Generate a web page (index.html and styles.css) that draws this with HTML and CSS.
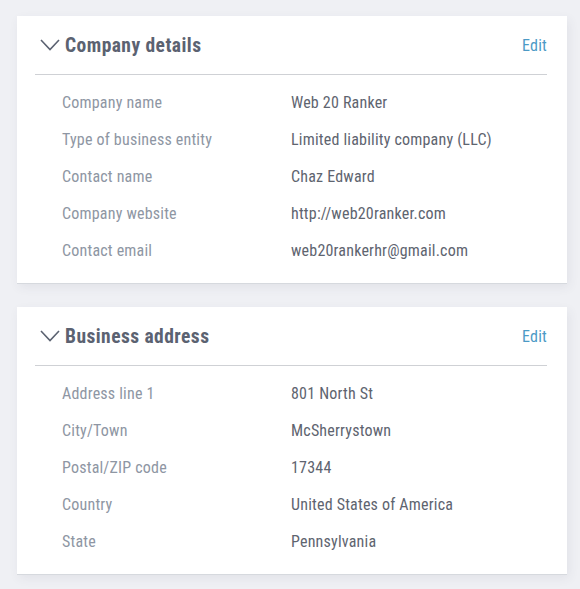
FILE: index.html
```html
<!DOCTYPE html>
<html lang="en">
<head>
  <meta charset="UTF-8">
  <meta name="viewport" content="width=device-width, initial-scale=1.0">
  <title>Company profile</title>
  <link rel="stylesheet" href="styles.css">
</head>
<body>
  <section class="card">
    <header class="card-header">
      <svg class="chevron" width="20" height="12" viewBox="0 0 20 12"><polyline points="1,1 10,10.5 19,1" fill="none" stroke="#5b6271" stroke-width="1.6"/></svg>
      <h2>Company details</h2>
      <a class="edit" href="#">Edit</a>
    </header>
    <dl class="details">
      <div class="row"><dt>Company name</dt><dd>Web 20 Ranker</dd></div>
      <div class="row"><dt>Type of business entity</dt><dd>Limited liability company (LLC)</dd></div>
      <div class="row"><dt>Contact name</dt><dd>Chaz Edward</dd></div>
      <div class="row"><dt>Company website</dt><dd>http://web20ranker.com</dd></div>
      <div class="row"><dt>Contact email</dt><dd>web20rankerhr@gmail.com</dd></div>
    </dl>
  </section>

  <section class="card">
    <header class="card-header">
      <svg class="chevron" width="20" height="12" viewBox="0 0 20 12"><polyline points="1,1 10,10.5 19,1" fill="none" stroke="#5b6271" stroke-width="1.6"/></svg>
      <h2>Business address</h2>
      <a class="edit" href="#">Edit</a>
    </header>
    <dl class="details">
      <div class="row"><dt>Address line 1</dt><dd>801 North St</dd></div>
      <div class="row"><dt>City/Town</dt><dd>McSherrystown</dd></div>
      <div class="row"><dt>Postal/ZIP code</dt><dd>17344</dd></div>
      <div class="row"><dt>Country</dt><dd>United States of America</dd></div>
      <div class="row"><dt>State</dt><dd>Pennsylvania</dd></div>
    </dl>
  </section>
</body>
</html>
```

FILE: styles.css
```css
body {
  margin: 0;
  padding: 16px 13px 14px 17px;
  background: #eff0f4;
  font-family: Roboto, 'Liberation Sans', sans-serif;
  font-stretch: 85%;
  color: #5a606b;
  display: flex;
  flex-direction: column;
  gap: 24px;
}

.card {
  background: #ffffff;
  padding: 0 20px 14px 18px;
  box-shadow: 0 1px 0 #d6d9de, 2px 4px 10px rgba(60, 70, 90, 0.08);
}

.card-header {
  display: flex;
  align-items: center;
  height: 58px;
  border-bottom: 1px solid #cfd1d5;
}

.chevron {
  margin: 0 5px 0 5px;
}

.card-header h2 {
  margin: 0;
  flex: 1;
  font-size: 19.5px;
  font-weight: 700;
  letter-spacing: 0.45px;
  color: #5b6271;
}

.edit {
  color: #4c9ac6;
  text-decoration: none;
  font-size: 16px;
  letter-spacing: 0.2px;
}

.details {
  margin: 9px 0 0;
  padding-left: 27px;
}

.row {
  display: flex;
  height: 37px;
  align-items: center;
  font-size: 16px;
  letter-spacing: 0.2px;
}

.row dt {
  width: 229px;
  color: #8e96a3;
}

.row dd {
  margin: 0;
  color: #5e646f;
}
```
